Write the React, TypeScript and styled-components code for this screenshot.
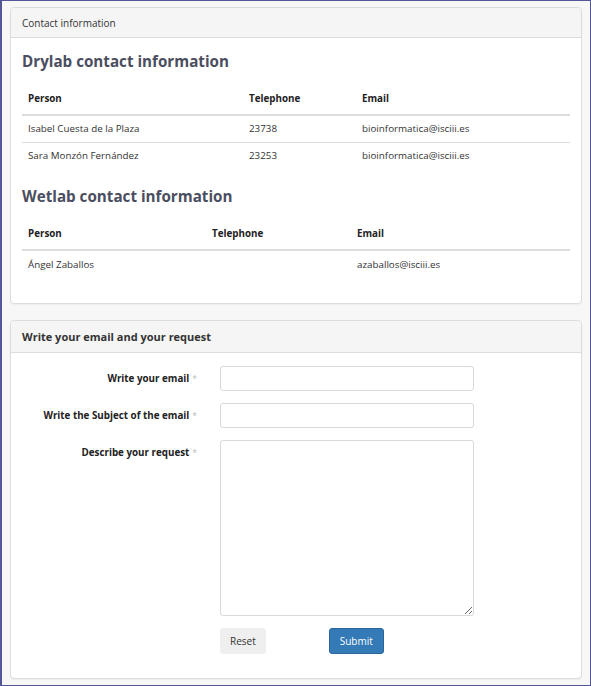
import React from "react";
import styled, { createGlobalStyle } from "styled-components";

const Global = createGlobalStyle`
  html, body { margin: 0; padding: 0; }
  body { font-family: "Open Sans", "Liberation Sans", sans-serif; color: #333; background: #f7f7f7; }
  * { box-sizing: border-box; }
`;

const Frame = styled.div`
  width: 591px;
  height: 686px;
  border: 1px solid #55559a;
  border-left-width: 2px;
  background: #f7f7f7;
  padding: 6px 8px 0 8px;
  display: flex;
  flex-direction: column;
  gap: 16px;
`;

const Card = styled.section`
  background: #fff;
  border: 1px solid #dcdcdc;
  border-radius: 4px;
  box-shadow: 0 1px 1px rgba(0, 0, 0, 0.04);
`;

const CardHeader = styled.div<{ $bold?: boolean }>`
  height: ${(p) => (p.$bold ? "32px" : "30px")};
  display: flex;
  align-items: center;
  padding: 0 11px;
  background: #f5f5f5;
  border-bottom: 1px solid #dddddd;
  border-radius: 4px 4px 0 0;
  font-size: ${(p) => (p.$bold ? "11px" : "10px")};
  font-weight: ${(p) => (p.$bold ? 700 : 400)};
  color: #333;
`;

const CardBody = styled.div<{ $pad: string }>`
  padding: ${(p) => p.$pad};
`;

const Heading = styled.h3<{ $top: number }>`
  margin: ${(p) => p.$top}px 0 0 0;
  font-size: 15.2px;
  line-height: 22px;
  font-weight: 700;
  color: #4a4e60;
`;

const Table = styled.table`
  width: 100%;
  border-collapse: collapse;
  table-layout: fixed;
  margin-top: 11px;
  font-size: 9.8px;
`;

const Th = styled.th<{ $w?: number }>`
  text-align: left;
  font-weight: 700;
  color: #222;
  height: 32px;
  padding: 0 6px;
  border-bottom: 2px solid #dddddd;
  width: ${(p) => (p.$w ? `${p.$w}px` : "auto")};
`;

const Td = styled.td`
  height: 27px;
  padding: 0 6px;
  color: #333;
  border-top: 1px solid #dddddd;
  tr:first-child > & { border-top: none; }
`;

const FormGrid = styled.div`
  display: grid;
  grid-template-columns: 183px 254px;
  column-gap: 15px;
  row-gap: 12px;
  align-items: start;
`;

const Label = styled.label`
  text-align: right;
  font-size: 9.8px;
  font-weight: 700;
  color: #222;
  padding-right: 8px;
  line-height: 25px;
`;

const Star = styled.span`
  color: #bbb;
  font-weight: 400;
  font-size: 8.5px;
  margin-left: 3px;
`;

const Input = styled.input`
  width: 254px;
  height: 25px;
  border: 1px solid #d9d9d9;
  border-radius: 3px;
  background: #fff;
  font-family: inherit;
`;

const TextArea = styled.textarea`
  width: 254px;
  height: 176px;
  border: 1px solid #d9d9d9;
  border-radius: 3px;
  background: #fff;
  font-family: inherit;
  display: block;
`;

const Buttons = styled.div`
  grid-column: 2;
  display: flex;
  gap: 63px;
`;

const Button = styled.button<{ $primary?: boolean }>`
  height: 26px;
  padding: 0 ${(p) => (p.$primary ? "10px" : "9px")};
  font-family: inherit;
  font-size: 10px;
  border-radius: 3px;
  border: 1px solid ${(p) => (p.$primary ? "#2a659b" : "#efefef")};
  background: ${(p) => (p.$primary ? "#337ab7" : "#efefef")};
  color: ${(p) => (p.$primary ? "#fff" : "#333")};
  cursor: pointer;
`;

const dry = [
  ["Isabel Cuesta de la Plaza", "23738", "bioinformatica@isciii.es"],
  ["Sara Monzón Fernández", "23253", "bioinformatica@isciii.es"],
];
const wet = [["Ángel Zaballos", "", "azaballos@isciii.es"]];

export default function App() {
  return (
    <>
      <Global />
      <Frame>
        <Card>
          <CardHeader>Contact information</CardHeader>
          <CardBody $pad="0 11px 26px 11px">
            <Heading $top={12}>Drylab contact information</Heading>
            <Table>
              <thead>
                <tr>
                  <Th $w={221}>Person</Th>
                  <Th $w={113}>Telephone</Th>
                  <Th>Email</Th>
                </tr>
              </thead>
              <tbody>
                {dry.map((r) => (
                  <tr key={r[0]}>
                    {r.map((c, i) => (
                      <Td key={i}>{c}</Td>
                    ))}
                  </tr>
                ))}
              </tbody>
            </Table>
            <Heading $top={16}>Wetlab contact information</Heading>
            <Table>
              <thead>
                <tr>
                  <Th $w={184}>Person</Th>
                  <Th $w={145}>Telephone</Th>
                  <Th>Email</Th>
                </tr>
              </thead>
              <tbody>
                {wet.map((r) => (
                  <tr key={r[0]}>
                    {r.map((c, i) => (
                      <Td key={i}>{c}</Td>
                    ))}
                  </tr>
                ))}
              </tbody>
            </Table>
          </CardBody>
        </Card>
        <Card>
          <CardHeader $bold>Write your email and your request</CardHeader>
          <CardBody $pad="13px 11px 24px 11px">
            <FormGrid>
              <Label>
                Write your email<Star>*</Star>
              </Label>
              <Input type="text" />
              <Label>
                Write the Subject of the email<Star>*</Star>
              </Label>
              <Input type="text" />
              <Label>
                Describe your request<Star>*</Star>
              </Label>
              <TextArea />
              <Buttons>
                <Button type="button">Reset</Button>
                <Button type="button" $primary>
                  Submit
                </Button>
              </Buttons>
            </FormGrid>
          </CardBody>
        </Card>
      </Frame>
    </>
  );
}
